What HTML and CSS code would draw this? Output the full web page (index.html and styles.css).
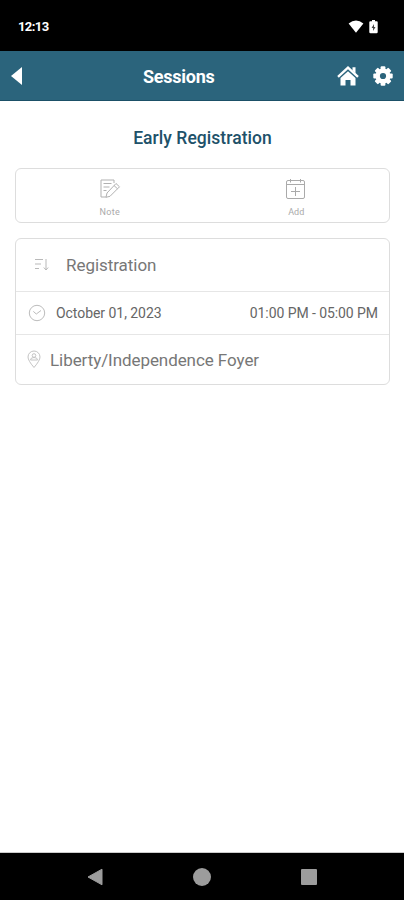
FILE: index.html
```html
<!DOCTYPE html>
<html lang="en">
<head>
<meta charset="utf-8">
<title>Sessions</title>
<link rel="stylesheet" href="styles.css">
</head>
<body>
<div class="status">
  <span class="clock">12:13</span>
  <svg class="wifi" width="16" height="14" viewBox="0 0 16 14"><path d="M.6 3.400Q8-2.400 15.400 3.400L8 12.800z" fill="#fff"/></svg>
  <svg class="battery" width="9" height="14" viewBox="0 0 9 14"><path d="M3 0h3v1.300h1.700q1 0 1 1V12q0 1.200-1.200 1.200h-6Q.3 13.200.3 12V2.300q0-1 1-1H3z" fill="#fff"/><path d="M5 4L2.600 8h1.500v3L6.500 7H5z" fill="#444"/></svg>
</div>
<header class="bar">
  <svg class="back" width="11" height="18" viewBox="0 0 11 18"><path d="M11 0v18L0 9z" fill="#fff"/></svg>
  <h1 class="bar-title">Sessions</h1>
  <svg class="home" width="22" height="20" viewBox="0 0 22 20"><path d="M1 10.800L11 1.700l10 9.100" stroke-width="2.400" fill="none" stroke="#fff"/><path d="M15.500 1.300h3v6l-3-2.700zM11 5.200l7.500 6.800v7.500h-5V14h-5v5.500h-5V12z" fill="#fff"/></svg>
  <svg class="gear" width="20" height="20" viewBox="-10 -10 20 20"><g fill="#fff"><g id="teeth"><rect x="-2.400" y="-9.700" width="4.800" height="19.400" rx="1"/><rect x="-9.700" y="-2.400" width="19.400" height="4.800" rx="1"/></g><use href="#teeth" transform="rotate(45)"/><circle r="7.500"/></g><circle r="3.100" fill="#2b647c"/></svg>
</header>
<main class="page">
  <h2 class="title">Early Registration</h2>
  <section class="card actions">
    <div class="action">
      <svg width="22" height="22" viewBox="0 0 22 22" fill="none" stroke="#b1b1b1"><path d="M15 5V2H2v17h5M4.500 5.500h8M4.500 9h6M4.500 12.500h3"/><path d="M8 15L17 5.500l3.500 3.300-9.500 9.500-4 1zM15 7.500l3.500 3.300"/></svg>
      <span class="note">Note</span>
    </div>
    <div class="action">
      <svg width="22" height="22" viewBox="0 0 22 22" fill="none" stroke="#aaa"><rect x="1.500" y="2.500" width="18" height="18" rx="1.500"/><path d="M1.500 6.500h18M5.500 1v3.500M15.500 1v3.500M10.500 9v9M6 13.500h9"/></svg>
      <span>Add</span>
    </div>
  </section>
  <section class="card details">
    <div class="row kind">
      <svg width="15" height="14" viewBox="0 0 15 14" fill="none" stroke="#b9b9b9"><path d="M1 1.500h8M1 6h6M1 10.500h4M12 1v11M9.800 9.500l2.200 2.500 2.200-2.500"/></svg>
      <span class="large registration">Registration</span>
    </div>
    <div class="row time">
      <svg width="18" height="18" viewBox="0 0 18 18" fill="none" stroke="#bcbcbc"><circle cx="9" cy="9" r="7.700"/><path d="M5.300 7.400L8.300 10l4.700-3.500"/></svg>
      <span class="date">October 01, 2023</span>
      <span class="hours">01:00 PM - 05:00 PM</span>
    </div>
    <div class="row place">
      <svg width="14" height="19" viewBox="0 0 14 19" fill="none" stroke="#c4c4c4"><path d="M7 17.500Q1 10.500 1 7a6 6 0 0 1 12 0Q13 10.500 7 17.500z"/><circle cx="7" cy="5.500" r="1.800"/><path d="M3.500 10q0-2.500 3.500-2.500t3.500 2.500z"/></svg>
      <span class="large venue">Liberty/Independence Foyer</span>
    </div>
  </section>
</main>
<footer class="nav">
  <svg width="16" height="18" viewBox="0 0 16 18"><path d="M15 1.200v15.600L1 9z" fill="#9c9c9c" stroke="#9c9c9c" stroke-linejoin="round"/></svg>
  <span class="circle"></span>
  <span class="square"></span>
</footer>
</body>
</html>
```
FILE: styles.css
```css
* { box-sizing: border-box; }
body {
  margin: 0;
  height: 900px;
  display: flex;
  flex-direction: column;
  background: #fff;
  font-family: Roboto, "Liberation Sans", sans-serif;
}
svg { display: block; flex: none; }
span, h1, h2 { white-space: nowrap; }
.status {
  height: 51px;
  padding: 2px 26px 0 18px;
  display: flex;
  align-items: center;
  background: #000;
  color: #fff;
}
.clock { font-size: 13px; font-weight: 700; letter-spacing: -0.6px; }
.wifi { margin-left: auto; }
.battery { margin-left: 5px; }
.bar {
  height: 50px;
  padding: 0 11px;
  display: grid;
  grid-template-columns: 60px 1fr 22px 20px;
  column-gap: 14px;
  align-items: center;
  background: #2b647c;
  border-bottom: 1px solid #1b5067;
}
.bar-title { margin: 3px 0 0 58px; font-size: 18px; line-height: 22px; font-weight: 700; letter-spacing: -0.25px; color: #fff; }
.page { flex: 1; padding: 25px 14px 0 15px; border-bottom: 1px solid #ccc; }
.title {
  margin: 0 0 17px;
  text-align: center;
  font-size: 17.5px;
  line-height: 25px;
  font-weight: 500;
  letter-spacing: 0.05px;
  color: #205169;
}
.card { border: 1px solid #ddd; border-radius: 6px; }
.actions { height: 55px; display: grid; grid-template-columns: 1fr 1fr; }
.action {
  display: flex;
  flex-direction: column;
  align-items: center;
  padding: 9px 0 0 1px;
  gap: 6px;
  font-size: 9px;
  line-height: 12px;
  color: #aaa;
}
.note { letter-spacing: 0.35px; }
.details { height: 147px; margin-top: 15px; }
.row { display: flex; align-items: center; }
.kind { height: 52px; padding-left: 18px; }
.time { height: 44px; padding: 0 11px 0 12px; border-top: 1px solid #e6e6e6; border-bottom: 1px solid #e6e6e6; font-size: 14px; color: #666; }
.place { height: 49px; padding-left: 11px; }
.large { font-size: 17px; color: #777; }
.registration { margin-left: 17px; letter-spacing: -0.05px; }
.date { margin-left: 10px; letter-spacing: -0.05px; }
.hours { margin-left: auto; letter-spacing: -0.07px; }
.venue { margin-left: 9px; letter-spacing: -0.07px; }
.nav {
  height: 47px;
  background: #000;
  display: flex;
  align-items: center;
  justify-content: center;
  gap: 90px;
}
.circle { width: 18px; height: 18px; border-radius: 50%; background: #9c9c9c; }
.square { width: 16px; height: 16px; border-radius: 1px; background: #9c9c9c; }
```
